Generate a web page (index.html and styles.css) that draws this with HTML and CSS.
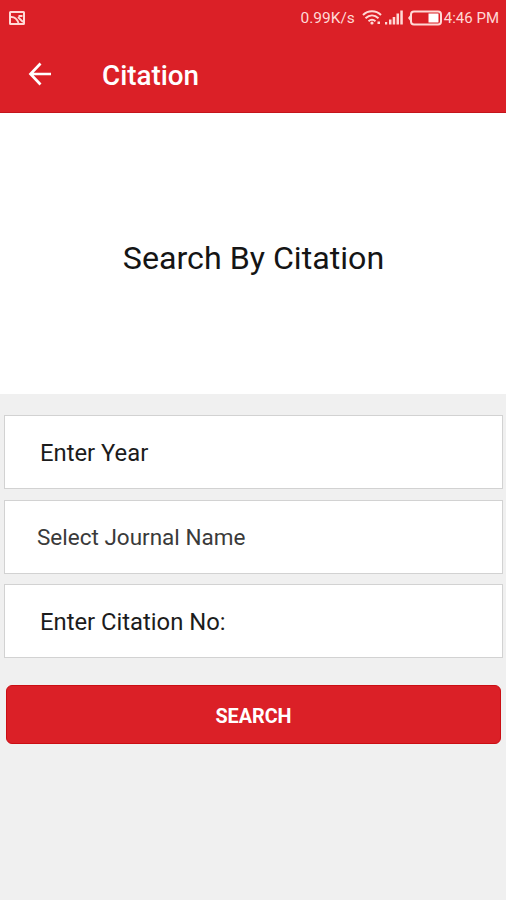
FILE: index.html
```html
<!DOCTYPE html>
<html lang="en">
<head>
    <meta charset="UTF-8">
    <meta name="viewport" content="width=device-width, initial-scale=1.0">
    <title>Citation</title>
    <link rel="stylesheet" href="styles.css">
</head>
<body>
    <header class="header">
        <div class="status-bar">
            <svg class="icon-image" width="16" height="14" viewBox="0 0 16 14">
                <rect x="1" y="1" width="14" height="12" rx="0.5" fill="none" stroke="currentColor" stroke-width="2"/>
                <path d="M2 6c4-.3 6 2 7.500 6M9 6l5 5M9.500 5h4" fill="none" stroke="currentColor" stroke-width="1.800"/>
            </svg>
            <span class="speed">0.99K/s</span>
            <svg class="icon-wifi" width="20" height="15" viewBox="0 0 20 15">
                <path d="M1 5c5-5 13-5 18 0M3.500 8.200c4-3.700 9-3.700 13 0M6.500 11.200c2.200-1.900 4.800-1.900 7 0" fill="none" stroke="currentColor" stroke-width="2"/>
                <circle cx="10" cy="13" r="1.600" fill="currentColor"/>
                <path d="M15.500 11.500h2.500v2.500h-2.500z" fill="currentColor"/>
            </svg>
            <svg class="icon-signal" width="18" height="15" viewBox="0 0 18 15">
                <path d="M0 12h2.200v2.500H0zM4 9.500h2.500v5H4zM7.700 7h2.500v7.500H7.700zM11.500 3.500H14v11h-2.500zM15.300 .5h2.500v14h-2.500z" fill="currentColor"/>
            </svg>
            <svg class="icon-battery" width="34" height="16" viewBox="0 0 34 16">
                <rect x="3" y="1.500" width="30" height="13" rx="3" fill="none" stroke="currentColor" stroke-width="2"/>
                <path d="M0 8l3-4v8z" fill="currentColor"/>
                <rect x="20.500" y="3.500" width="10" height="9" fill="#fff"/>
            </svg>
            <span class="time">4:46 PM</span>
        </div>
        <div class="toolbar">
            <svg class="icon-back" width="24" height="24" viewBox="0 0 24 24">
                <path d="M12.500 1.500L2.500 12l10 10.500M2.500 12H23" fill="none" stroke="currentColor" stroke-width="2.700"/>
            </svg>
            <h1 class="title">Citation</h1>
        </div>
    </header>

    <div class="banner">
        <h2>Search By Citation</h2>
    </div>

    <form class="search-form">
        <input type="text" class="field" placeholder="Enter Year">
        <input type="text" class="field journal" placeholder="Select Journal Name">
        <input type="text" class="field" placeholder="Enter Citation No:">
        <button type="button" class="btn">SEARCH</button>
    </form>
</body>
</html>
```

FILE: styles.css
```css
* {
    box-sizing: border-box;
}

body {
    font-family: Roboto, sans-serif;
    background-color: #f0f0f0;
    margin: 0;
    padding: 0;
}

.header {
    height: 113px;
    background-color: #db2027;
    border-bottom: 1px solid #c4141b;
    color: white;
}

.status-bar {
    display: flex;
    align-items: center;
    height: 35px;
    padding: 0 7px 0 9px;
    color: #ffd9d6;
    font-size: 15px;
}

.speed {
    margin-left: auto;
    font-size: 15.5px;
}

.speed, .time {
    padding-top: 1px;
}

.icon-wifi {
    margin-left: 7px;
}

.icon-signal {
    margin-left: 3px;
}

.icon-battery {
    margin: 0 2px 0 5px;
}

.toolbar {
    display: flex;
    align-items: center;
    height: 77px;
    padding: 0 28px;
}

.title {
    margin: 3px 0 0 50px;
    font-size: 27.8px;
    font-weight: 500;
}

.banner {
    display: flex;
    align-items: center;
    justify-content: center;
    height: 281px;
    background-color: white;
}

.banner h2 {
    margin: 8px 0 0 1px;
    color: #151515;
    font-size: 32.2px;
    font-weight: 400;
}

.search-form {
    display: flex;
    flex-direction: column;
    gap: 10.5px;
    padding: 21.2px 3px 0 4px;
}

.field {
    width: 100%;
    height: 74px;
    padding: 2px 35px 0;
    border: 1px solid #d2d2d2;
    border-radius: 0;
    background-color: white;
    font-family: inherit;
    font-size: 23.8px;
}

.field::placeholder {
    color: #1c1c1c;
    opacity: 1;
}

.journal {
    padding: 0 32px;
    font-size: 22.5px;
}

.journal::placeholder {
    color: #3a3a3a;
}

.btn {
    height: 59px;
    margin: 16.3px 2px 0;
    padding: 4px 0 0;
    border: 1px solid #cb0d13;
    border-radius: 6px;
    background-color: #db2027;
    color: white;
    font-family: inherit;
    font-size: 19.8px;
    font-weight: 700;
}
```
